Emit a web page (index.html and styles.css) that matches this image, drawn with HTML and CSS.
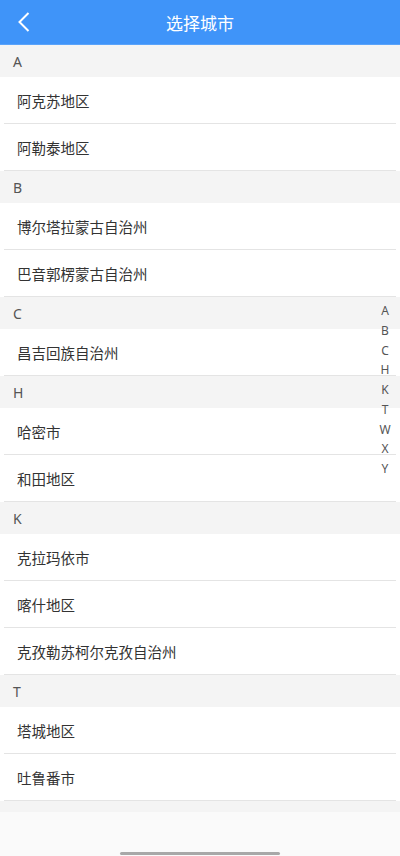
FILE: index.html
```html
<!DOCTYPE html>
<html lang="zh">
<head>
<meta charset="utf-8">
<link rel="stylesheet" href="styles.css">
</head>
<body>
<header class="topbar">
  <svg class="back" width="14" height="22" viewBox="0 0 14 22"><path d="M11.5 2 L2.5 11 L11.5 20" fill="none" stroke="#fff" stroke-width="2"/></svg>
  <h1 class="title">选择城市</h1>
</header>
<main class="list">
  <div class="sec">A</div>
  <div class="item">阿克苏地区</div>
  <div class="item">阿勒泰地区</div>
  <div class="sec">B</div>
  <div class="item">博尔塔拉蒙古自治州</div>
  <div class="item">巴音郭楞蒙古自治州</div>
  <div class="sec">C</div>
  <div class="item">昌吉回族自治州</div>
  <div class="sec">H</div>
  <div class="item">哈密市</div>
  <div class="item">和田地区</div>
  <div class="sec">K</div>
  <div class="item">克拉玛依市</div>
  <div class="item">喀什地区</div>
  <div class="item">克孜勒苏柯尔克孜自治州</div>
  <div class="sec">T</div>
  <div class="item">塔城地区</div>
  <div class="item">吐鲁番市</div>
</main>
<nav class="index">
  <span>A</span><span>B</span><span>C</span><span>H</span><span>K</span><span>T</span><span>W</span><span>X</span><span>Y</span>
</nav>
<div class="home-bar"></div>
</body>
</html>
```
FILE: styles.css
```css
html, body {
  margin: 0;
  padding: 0;
}
body {
  width: 400px;
  height: 856px;
  background: #fafafa;
  font-family: "Noto Sans CJK SC", "Noto Sans", sans-serif;
  position: relative;
  overflow: hidden;
}
.topbar {
  height: 45px;
  background: #3f94f9;
  display: flex;
  align-items: center;
  justify-content: center;
  position: relative;
  border-bottom: 1px solid #5aa3fa;
  box-sizing: border-box;
}
.back {
  position: absolute;
  left: 17px;
  top: 11px;
}
.title {
  margin: 0;
  color: #fff;
  font-size: 17px;
  font-weight: normal;
  line-height: 1;
}
.list {
  background: #f4f4f4;
  padding-bottom: 11px;
}
.sec {
  height: 32px;
  display: flex;
  align-items: center;
  padding-left: 13px;
  font-size: 14px;
  color: #555;
  font-family: "Noto Sans", "Noto Sans CJK SC", sans-serif;
  background: #f4f4f4;
}
.item {
  position: relative;
  height: 47px;
  box-sizing: border-box;
  padding: 0 0 1px 17px;
  display: flex;
  align-items: center;
  font-size: 14.5px;
  color: #333;
  background: #fff;
}
.item::after {
  content: "";
  position: absolute;
  left: 4px;
  right: 4px;
  bottom: 0;
  height: 1px;
  background: #e4e4e4;
}
.index {
  position: absolute;
  right: 8px;
  top: 301px;
  display: flex;
  flex-direction: column;
  align-items: center;
  width: 14px;
}
.index span {
  height: 19.75px;
  line-height: 19.75px;
  font-size: 12px;
  color: #555;
  font-family: "Noto Sans", sans-serif;
}
.home-bar {
  position: absolute;
  left: 120px;
  width: 160px;
  bottom: 1px;
  height: 3px;
  border-radius: 2px;
  background: #a8a8a8;
}
```
